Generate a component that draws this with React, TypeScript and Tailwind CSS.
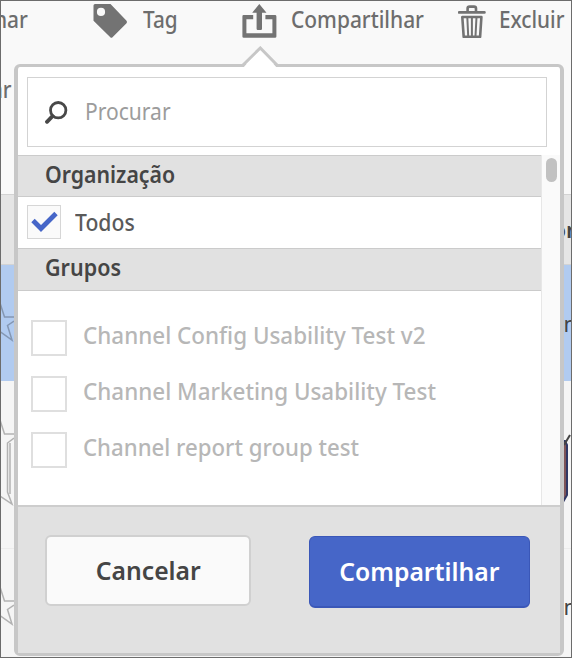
import React from "react";

const label = "inline-block origin-left whitespace-nowrap leading-[30px]";

function TagIcon() {
  return (
    <svg width="34" height="35" viewBox="0 0 34 35" className="block shrink-0">
      <path
        fillRule="evenodd"
        fill="#737373"
        d="M2 0H17.5L33.3 16.6Q34.6 18 33.3 19.4L19.5 33.2Q18.4 34.2 17.3 33.2L.5 16.8V1.5Q.5 0 2 0ZM8 3.8A4.1 4.1 0 1 0 8 12A4.1 4.1 0 1 0 8 3.8Z"
      />
    </svg>
  );
}

function ShareIcon() {
  return (
    <svg width="35" height="34" viewBox="0 0 35 34" className="block shrink-0" fill="#737373">
      <path d="M17.3 0L24.5 8.8H20V24.8Q20 26 18.8 26H15.8Q14.6 26 14.6 24.8V8.8H10.2Z" />
      <path d="M1.5 11H11.2V15.2H4.4V29.2H30.4V15.2H23.4V11H33Q34.4 11 34.4 12.4V32.4Q34.4 33.8 33 33.8H1.8Q.4 33.8 .4 32.4V12.4Q.4 11 1.5 11Z" />
    </svg>
  );
}

function TrashIcon() {
  return (
    <svg width="28" height="34" viewBox="0 0 28 34" className="mt-px block shrink-0" fill="none" stroke="#737373">
      <path d="M1.2 7.4H26.4" strokeWidth="2.8" strokeLinecap="round" />
      <path d="M9.6 6.5V3.6Q9.6 1.6 11.6 1.6H16Q18 1.6 18 3.6V6.5" strokeWidth="2.6" />
      <path d="M4.3 12H23.4L22.1 31.8H5.7Z" strokeWidth="2.6" strokeLinejoin="round" />
      <path d="M9.3 12L10.2 31M13.9 12V31M18.5 12L17.5 31" strokeWidth="2" />
    </svg>
  );
}

function SearchIcon() {
  return (
    <svg width="23" height="23" viewBox="0 0 23 23" className="block shrink-0" fill="none" stroke="#484848">
      <circle cx="13.2" cy="9.2" r="7.7" strokeWidth="2.8" />
      <path d="M7.5 15.2L2 20.8" strokeWidth="3.8" strokeLinecap="round" />
    </svg>
  );
}

function StarEdge({ stroke }: { stroke: string }) {
  return (
    <svg width="14" height="42" viewBox="0 0 14 42" className="block" fill="none" stroke={stroke} strokeWidth="1.5">
      <path d="M0 1L4.5 15H14M14 19L7.5 23.5L12 38L0 29.5" />
    </svg>
  );
}

function SectionHeader({ children, className }: { children: React.ReactNode; className: string }) {
  return (
    <div className={`flex items-center border-y-[1.5px] border-[#cbcbcb] bg-[#e1e1e1] pl-[27px] font-semibold text-[#454545] ${className}`}>
      {children}
    </div>
  );
}

function GroupRow({ name, scale }: { name: string; scale: string }) {
  return (
    <div className="flex h-9 items-center">
      <div className="size-9 shrink-0 border-2 border-[#dfdfdf] bg-white" />
      <span className={`${label} relative -top-[3px] ml-4 text-2xl font-medium text-[#b7b7b7] ${scale}`}>{name}</span>
    </div>
  );
}

export default function App() {
  return (
    <div className="relative h-[658px] w-[572px] overflow-hidden bg-[#f9f9f9] font-['Noto_Sans',sans-serif] text-[#6d6d6d]">
      {/* Page behind the popover */}
      <div className="flex h-full flex-col">
        <div className="relative flex h-[194px] shrink-0 flex-col">
          <div className="flex h-[42px] items-start pt-1 text-[23px] font-medium">
            <div className="flex w-[93px]">
              <span className={`${label} -ml-[6px] scale-x-[.91]`}>nar</span>
            </div>
            <div className="flex w-[149px]">
              <TagIcon />
              <span className={`${label} ml-4 scale-x-[.9]`}>Tag</span>
            </div>
            <div className="flex w-[217px]">
              <ShareIcon />
              <span className={`${label} ml-[14px] scale-x-[.91]`}>Compartilhar</span>
            </div>
            <div className="flex">
              <TrashIcon />
              <span className={`${label} ml-[13px] scale-x-[.9]`}>Excluir</span>
            </div>
          </div>
          <div className="mt-8 flex text-[23px] font-medium">
            <span className={`${label} -ml-[9px] scale-x-[.9]`}>ar</span>
          </div>
        </div>
        <div className="flex h-[71px] shrink-0 items-center justify-end overflow-hidden border-y border-[#d3d3d3] bg-[#e5e5e5] text-[22px] font-semibold text-[#444]">
          <span className="-mr-[8px]">on</span>
        </div>
        <div className="flex h-[116px] shrink-0 items-center justify-between overflow-hidden bg-[#b1cbf0] text-[22px] text-[#444]">
          <StarEdge stroke="#8497b3" />
          <span className="-mr-[12px]">m</span>
        </div>
        <div className="flex h-[168px] shrink-0 items-start justify-between border-b border-[#ececec] bg-[#f5f5f5] pt-[38px]">
          <svg width="14" height="90" viewBox="0 0 14 90" fill="none" stroke="#b2b2b2" strokeWidth="1.5">
            <path d="M0 1L4.5 15H14M14 19L7.5 24V73L12 85L0 77M10 24V75" />
          </svg>
          <svg width="10" height="78" viewBox="0 0 10 78" fill="none" className="mt-3">
            <path d="M0 10H3L5 14V64L2 70H0Z" fill="#7e5457" />
            <path d="M0 10H3L5 14V64L1 71" stroke="#303864" strokeWidth="2" />
            <path d="M2 14L8 4" stroke="#444" strokeWidth="2" />
          </svg>
        </div>
        <div className="flex flex-1 items-center justify-between overflow-hidden bg-[#f5f5f5] pt-[6px] text-[22px] text-[#444]">
          <StarEdge stroke="#b2b2b2" />
          <span className="-mr-[12px]">m</span>
        </div>
      </div>

      {/* Share popover */}
      <div className="absolute left-[14px] top-[64px] flex h-[592px] w-[550px] flex-col rounded-md border-x-4 border-y-[3px] border-[#c7c7c7] bg-white">
        <div className="ml-[9px] mr-[13px] mt-[10px] flex h-[70px] shrink-0 items-center border-[1.5px] border-[#d3d3d3] pl-[17px]">
          <SearchIcon />
          <span className={`${label} relative -top-px ml-[17px] text-[23px] text-[#9c9c9c] scale-x-[.915]`}>Procurar</span>
        </div>
        <div className="mt-[8px] flex h-[350px] shrink-0">
          <div className="flex flex-1 flex-col">
            <SectionHeader className="h-[42px]">
              <span className={`${label} relative -top-[2px] text-[23px] scale-x-[.925]`}>Organização</span>
            </SectionHeader>
            <div className="flex h-[51px] items-center pl-[9px]">
              <div className="relative -top-px flex size-[34px] items-center justify-center border-[1.5px] border-[#d6d6d6] bg-[#fafafa]">
                <svg width="27" height="22" viewBox="0 0 27 22" fill="none" stroke="#4666c8" strokeWidth="4.8">
                  <path d="M2 9.5L10 17.5L25 2.5" />
                </svg>
              </div>
              <span className={`${label} relative -top-px ml-[14px] text-[23px] font-medium text-[#5a5a5a] scale-x-[.92]`}>Todos</span>
            </div>
            <SectionHeader className="h-[43px]">
              <span className={`${label} relative -top-[3px] text-[23px] scale-x-[.935]`}>Grupos</span>
            </SectionHeader>
            <div className="flex flex-col gap-5 pl-[13px] pt-[29px]">
              <GroupRow name="Channel Config Usability Test v2" scale="scale-x-[.935]" />
              <GroupRow name="Channel Marketing Usability Test" scale="scale-x-[.935]" />
              <GroupRow name="Channel report group test" scale="scale-x-[.925]" />
            </div>
          </div>
          <div className="flex w-[19px] justify-center border-l-[1.5px] border-[#e7e7e7] bg-[#fafafa] pt-[3px]">
            <div className="h-6 w-[11px] rounded-full bg-[#c1c1c1]" />
          </div>
        </div>
        <div className="flex flex-1 items-start justify-between border-t-2 border-[#cdcdcd] bg-[#e1e1e1] pl-[27px] pr-[30px] pt-[28px] text-[26px] font-semibold">
          <button className="flex h-[71px] w-[206px] items-center justify-center rounded-md border-2 border-[#d0d0d0] bg-[#fafafa] text-[#454545]">
            <span className="inline-block scale-x-[.95]">Cancelar</span>
          </button>
          <button className="mt-px flex h-[72px] w-[221px] items-center justify-center rounded-md border border-b-2 border-[#3a57b8] bg-[#4666c8] text-white">
            <span className="inline-block scale-x-[.95]">Compartilhar</span>
          </button>
        </div>
      </div>

      {/* Arrow that joins the popover to the share button */}
      <svg width="40" height="22" viewBox="0 0 40 22" className="absolute left-[240px] top-[46px]">
        <path d="M3 22L20.3 2.5L37 22Z" fill="#fff" />
        <path d="M2 20L20.3 2L38 20" fill="none" stroke="#c7c7c7" strokeWidth="3" />
      </svg>

      {/* Window frame */}
      <div className="pointer-events-none absolute inset-0 border border-[#6c6c6c]" />
    </div>
  );
}
